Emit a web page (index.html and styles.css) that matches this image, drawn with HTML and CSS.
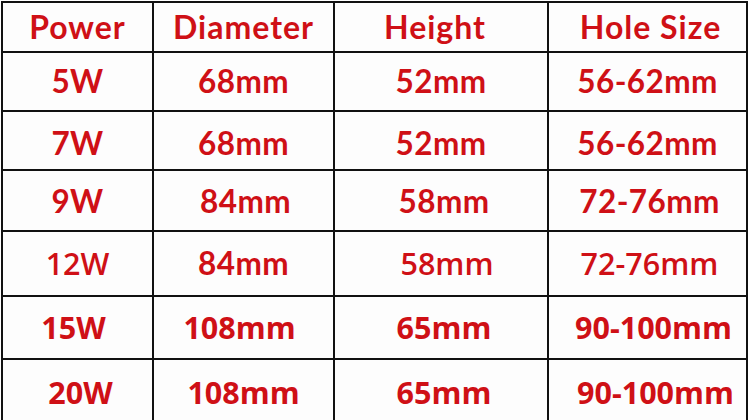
FILE: index.html
```html
<!DOCTYPE html>
<html>
<head>
<meta charset="utf-8">
<link rel="stylesheet" href="styles.css">
</head>
<body>
<div class="sheet">
  <div class="row head">
    <div class="cell">Power</div>
    <div class="cell">Diameter</div>
    <div class="cell nl6">Height</div>
    <div class="cell nr3">Hole Size</div>
  </div>
  <div class="row r1 calib">
    <div class="cell">5W</div>
    <div class="cell">68mm</div>
    <div class="cell">52mm</div>
    <div class="cell">56-62mm</div>
  </div>
  <div class="row r2 calib">
    <div class="cell">7W</div>
    <div class="cell">68mm</div>
    <div class="cell">52mm</div>
    <div class="cell">56-62mm</div>
  </div>
  <div class="row r3 calib">
    <div class="cell">9W</div>
    <div class="cell nr2">84mm</div>
    <div class="cell nr3">58mm</div>
    <div class="cell nr2">72-76mm</div>
  </div>
  <div class="row r4 taho">
    <div class="cell">12W</div>
    <div class="cell calib">84mm</div>
    <div class="cell nr6">58mm</div>
    <div class="cell nr2">72-76mm</div>
  </div>
  <div class="row r5 taho bold">
    <div class="cell nl4">15W</div>
    <div class="cell nl4">108mm</div>
    <div class="cell nr3">65mm</div>
    <div class="cell nr6">90-100mm</div>
  </div>
  <div class="row r6 taho bold">
    <div class="cell nr3">20W</div>
    <div class="cell">108mm</div>
    <div class="cell nr3">65mm</div>
    <div class="cell nr8">90-100mm</div>
  </div>
</div>
</body>
</html>
```
FILE: styles.css
```css
html, body {
  margin: 0;
  padding: 0;
  background: #ffffff;
  overflow: hidden;
}
.sheet {
  margin: 1px 0 0 1px;
  width: 747px;
  box-sizing: border-box;
  padding: 2px 2px 0 2px;
  background: #111111;
  display: flex;
  flex-direction: column;
  gap: 2px;
}
.row {
  display: grid;
  grid-template-columns: 149px 179px 212px 197px;
  column-gap: 2px;
  font-family: Lato, "Liberation Sans", sans-serif;
  font-weight: 700;
  font-size: 29px;
  color: #cf1016;
}
.cell {
  background: #fdfdfd;
  display: flex;
  align-items: center;
  justify-content: center;
  line-height: 1;
}
.head { height: 48px; font-size: 32px; letter-spacing: 1px; }
.r1 { height: 57px; }
.r2 { height: 57px; }
.r3 { height: 59px; }
.r4 { height: 63px; }
.r5 { height: 61px; }
.r6 { height: 62px; }
.calib { font-family: Lato, "Liberation Sans", sans-serif; font-weight: 700; font-size: 31.5px; letter-spacing: 0.4px; }
.taho { font-family: "Open Sans", "DejaVu Sans", sans-serif; font-weight: 600; font-size: 30.5px; }
.bold { font-weight: 700; }
.r2 .cell { padding-top: 6px; }
.r3 .cell { padding-top: 2px; }
.r6 .cell { padding-top: 3px; }
.nl4 { padding-right: 8px; }
.nl6 { padding-right: 12px; }
.nr2 { padding-left: 4px; }
.nr3 { padding-left: 6px; }
.nr6 { padding-left: 12px; }
.nr8 { padding-left: 16px; }
```
